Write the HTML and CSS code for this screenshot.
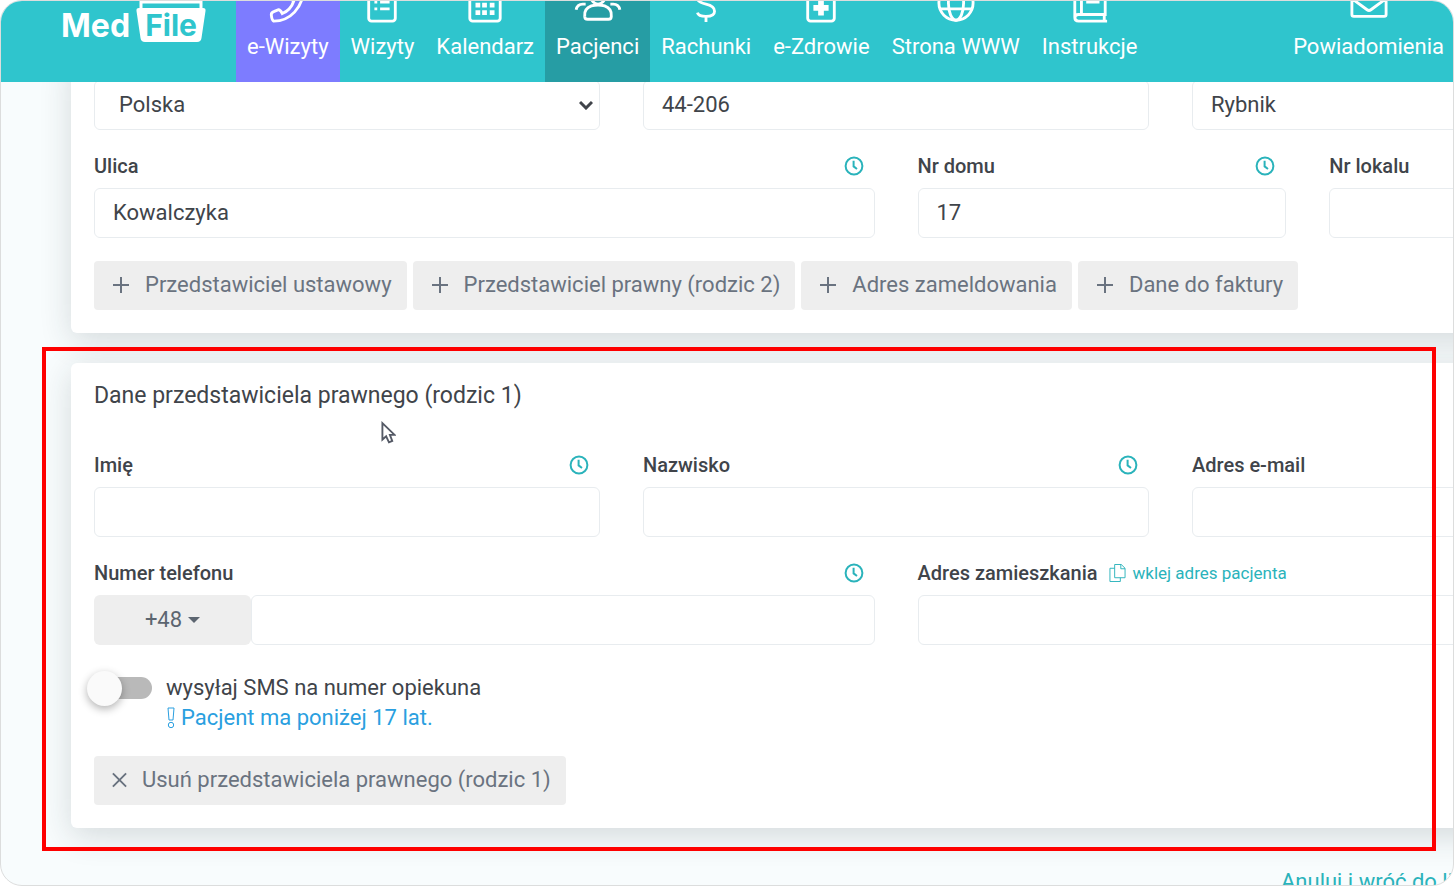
FILE: index.html
```html
<!DOCTYPE html>
<html lang="pl">
<head>
<meta charset="utf-8">
<title>MedFile - Pacjenci</title>
<link rel="stylesheet" href="styles.css">
</head>
<body>
<svg class="defs" aria-hidden="true">
  <symbol id="clock" viewBox="0 0 20 20"><circle cx="10" cy="10" r="8.4"/><path d="M9.6 4.8V10.4L13 13"/></symbol>
  <symbol id="plus" viewBox="0 0 18 18"><path d="M9 1V17M1 9H17"/></symbol>
</svg>
<div class="frame">
  <header class="topbar">
    <a class="logo" href="#" aria-label="MedFile">
      <span class="logo-med">Med</span>
      <span class="logo-box">
        <svg class="logo-folder" viewBox="0 0 70 42" aria-hidden="true"><path d="M5 0V8M65 0V8M5 1H65" fill="none" stroke="#fff" stroke-width="3"/><path d="M3 7H67Q70 7 69.500 10L65.500 37Q65 41 61 41H9Q5 41 4.500 37L.5 10Q0 7 3 7Z" fill="#fff" stroke="none"/></svg>
        <span class="logo-file">File</span>
      </span>
    </a>
    <nav class="nav">
      <a class="nav-item visits" href="#"><svg class="nav-icon" viewBox="0 0 40 40"><path d="M36 6C35 22 23 37 5 37Q3 36 2.500 31Q2 28 5 27L10 25Q12 25 14 29Q23 25 26 16L22 13V9L26 3L34 4Z"/></svg>e-Wizyty</a>
      <a class="nav-item" href="#"><svg class="nav-icon" viewBox="0 0 40 40"><rect x="6" y="4" width="28" height="33" rx="3"/><path d="M12 17H15M18 17H28M12 24H15M18 24H28"/></svg>Wizyty</a>
      <a class="nav-item" href="#"><svg class="nav-icon" viewBox="0 0 40 40"><rect x="4" y="4" width="32" height="33" rx="3"/><path d="M10 20H15M17 20H22M25 20H30M10 28H15M17 28H22M25 28H30" stroke-width="5"/></svg>Kalendarz</a>
      <a class="nav-item active" href="#"><svg class="nav-icon wide" viewBox="0 0 50 40"><circle cx="25" cy="12" r="7"/><path d="M11 32Q10 24 18 21Q25 19 32 21Q40 24 39 32Q39 35 36 35H14Q11 35 11 32M2 25Q3 19 9 19H12M48 25Q47 19 41 19H38"/></svg>Pacjenci</a>
      <a class="nav-item" href="#"><svg class="nav-icon" viewBox="0 0 40 40"><path d="M29 13Q28 8 20 8Q11 8 11 13Q11 17 20 19Q29 21 29 26.500Q29 32 20 32Q12 32 11 28M20 3V8M20 32V38"/></svg>Rachunki</a>
      <a class="nav-item" href="#"><svg class="nav-icon" viewBox="0 0 40 40"><rect x="6" y="4" width="28" height="33" rx="3"/><path d="M20 15V31M12 23H28" stroke-width="6"/></svg>e-Zdrowie</a>
      <a class="nav-item" href="#"><svg class="nav-icon" viewBox="0 0 40 40"><circle cx="20" cy="18" r="18"/><ellipse cx="20" cy="18" rx="8" ry="18"/><path d="M4 12H36M3 24H37"/></svg>Strona WWW</a>
      <a class="nav-item" href="#"><svg class="nav-icon" viewBox="0 0 40 40"><path d="M36 4H8Q4 4 4 8V33Q4 37 8 37H38M35 30V37M36 4V30H8Q4 30 4 34M11 4V30M16 17H30"/></svg>Instrukcje</a>
    </nav>
    <a class="nav-item notices" href="#"><svg class="nav-icon" viewBox="0 0 40 40"><path d="M2 5H38V30Q38 32 36 32H4Q2 32 2 30ZM3 14L18 25Q20 26.500 22 25L37 14"/></svg>Powiadomienia</a>
  </header>

  <main class="content">
    <section class="card address">
      <div class="grid">
        <div class="select span-4">
          <select class="control" aria-label="Kraj"><option>Polska</option></select>
          <svg class="chevron" viewBox="0 0 14 10" aria-hidden="true"><path d="M1 2L7 8L13 2"/></svg>
        </div>
        <input class="control span-4" aria-label="Kod pocztowy" value="44-206">
        <input class="control span-4" aria-label="Miasto" value="Rybnik">
        <div class="span-6">
          <div class="label-row"><label for="street">Ulica</label><button class="history" aria-label="Historia"><svg><use href="#clock"/></svg></button></div>
          <input class="control" id="street" value="Kowalczyka">
        </div>
        <div class="span-3">
          <div class="label-row"><label for="house">Nr domu</label><button class="history" aria-label="Historia"><svg><use href="#clock"/></svg></button></div>
          <input class="control" id="house" value="17">
        </div>
        <div class="span-3">
          <div class="label-row"><label for="flat">Nr lokalu</label></div>
          <input class="control" id="flat">
        </div>
      </div>
      <div class="buttons">
        <button class="btn"><svg><use href="#plus"/></svg>Przedstawiciel ustawowy</button>
        <button class="btn"><svg><use href="#plus"/></svg>Przedstawiciel prawny (rodzic 2)</button>
        <button class="btn"><svg><use href="#plus"/></svg>Adres zameldowania</button>
        <button class="btn"><svg><use href="#plus"/></svg>Dane do faktury</button>
      </div>
    </section>

    <section class="card guardian">
      <h2 class="title">Dane przedstawiciela prawnego (rodzic 1)</h2>
      <div class="grid">
        <div class="span-4">
          <div class="label-row"><label for="first">Imię</label><button class="history" aria-label="Historia"><svg><use href="#clock"/></svg></button></div>
          <input class="control" id="first">
        </div>
        <div class="span-4">
          <div class="label-row"><label for="last">Nazwisko</label><button class="history" aria-label="Historia"><svg><use href="#clock"/></svg></button></div>
          <input class="control" id="last">
        </div>
        <div class="span-4">
          <div class="label-row"><label for="mail">Adres e-mail</label></div>
          <input class="control" id="mail">
        </div>
        <div class="span-6">
          <div class="label-row"><label for="phone">Numer telefonu</label><button class="history" aria-label="Historia"><svg><use href="#clock"/></svg></button></div>
          <div class="phone"><button class="prefix">+48<span class="caret"></span></button><input class="control" id="phone"></div>
        </div>
        <div class="span-6">
          <div class="label-row"><label for="home">Adres zamieszkania</label><a class="paste" href="#"><svg viewBox="0 0 18 20"><path d="M6 1H13L17 5V15H6ZM12.500 1V5.500H17M6 5H1V19H12V15"/></svg>wklej adres pacjenta</a></div>
          <input class="control" id="home">
        </div>
      </div>
      <div class="sms">
        <input class="switch" type="checkbox" id="sms">
        <div>
          <label class="sms-label" for="sms">wysyłaj SMS na numer opiekuna</label>
          <p class="hint"><svg viewBox="0 0 10 22"><path d="M2 1H8L7 13H3Z"/><circle cx="5" cy="18" r="2.700"/></svg>Pacjent ma poniżej 17 lat.</p>
        </div>
      </div>
      <button class="btn remove"><svg viewBox="0 0 18 18"><path d="M2 2L16 16M16 2L2 16"/></svg>Usuń przedstawiciela prawnego (rodzic 1)</button>
    </section>
  </main>
  <footer class="footer"><a href="#">Anuluj i wróć do listy</a></footer>

  <div class="highlight"></div>
  <svg class="pointer" viewBox="0 0 16 24" aria-hidden="true"><path d="M1.500 1.500V19L5.500 15.500L8.500 22L12 20.500L9.500 14H14.500Z"/></svg>
</div>
</body>
</html>
```
FILE: styles.css
```css
* { box-sizing: border-box; }
body {
  margin: 0;
  background: #fff;
  color: #40444a;
  font: 22px/26px Roboto, sans-serif;
}
button, input, select { font: inherit; color: inherit; }
a { text-decoration: none; }
svg { fill: none; stroke: currentColor; }
.defs { display: none; }
.frame {
  position: relative;
  height: 100vh;
  overflow: hidden;
  border: 1px solid #dcdddd;
  border-radius: 22px;
  background: #f8fcfd;
}

/* top bar */
.topbar {
  position: relative;
  z-index: 1;
  display: flex;
  height: 81px;
  overflow: hidden;
  background: #2fc5cd;
  color: #fff;
}
.logo {
  display: flex;
  align-items: flex-start;
  gap: 6px;
  width: 235px;
  padding-left: 60px;
  color: #fff;
  font: 700 32px/36px Inter, sans-serif;
}
.logo-med { padding-top: 7px; }
.logo-box { position: relative; width: 70px; height: 42px; }
.logo-folder { display: block; width: 70px; height: 42px; }
.logo-file {
  position: absolute;
  inset: 6px 0 0;
  color: #2fc5cd;
  font-size: 30px;
  text-align: center;
}
.nav { display: flex; align-items: flex-end; }
.nav-item {
  display: flex;
  flex-direction: column;
  align-items: center;
  justify-content: flex-end;
  gap: 10px;
  height: 96px;
  padding: 0 11px 22px;
  color: #fff;
  white-space: nowrap;
}
.nav-icon { width: 38px; height: 38px; stroke-width: 3; flex: none; }
.nav-icon.wide { width: 48px; }
.visits { background: #7d7cff; }
.active { background: #269da4; }
.notices { align-self: flex-end; margin-left: auto; padding-right: 9px; }

/* cards */
.content { display: grid; gap: 30px; margin: -26px -268px 0 70px; }
.card {
  padding: 0 23px 23px;
  border-radius: 6px;
  background: #fff;
  box-shadow: 0 8px 32px rgba(30, 45, 50, .16);
}
.address { padding-top: 24px; }
.guardian { padding-top: 20px; }
.title { margin: 0 0 43px; font-size: 23px; font-weight: 400; }
.grid {
  display: grid;
  grid-template-columns: repeat(12, minmax(0, 1fr));
  gap: 23px 43px;
}
.span-3 { grid-column: span 3; }
.span-4 { grid-column: span 4; }
.span-6 { grid-column: span 6; }
.label-row {
  display: flex;
  align-items: center;
  height: 26px;
  margin-bottom: 9px;
  padding-right: 11px;
  font-size: 20px;
  font-weight: 500;
}
.history {
  display: flex;
  margin-left: auto;
  padding: 0;
  border: 0;
  background: none;
  color: #2ab3bb;
}
.history svg { width: 20px; height: 20px; stroke-width: 2; }
.control {
  display: block;
  width: 100%;
  height: 50px;
  padding: 0 18px 2px;
  border: 1px solid #e8ecef;
  border-radius: 6px;
  background-color: #fff;
}
.select { position: relative; }
.select .control { appearance: none; padding: 0 24px; }
.chevron {
  position: absolute;
  top: 20px;
  right: 7px;
  width: 14px;
  height: 10px;
  stroke-width: 3;
  pointer-events: none;
}
.buttons { display: flex; gap: 6px; margin-top: 23px; }
.btn {
  display: flex;
  align-items: center;
  gap: 15px;
  height: 49px;
  padding: 0 15px 2px 18px;
  border: 0;
  border-radius: 4px;
  background: #eee;
  color: #6a7380;
  white-space: nowrap;
}
.btn svg { width: 18px; height: 18px; stroke-width: 2; }
.phone { display: flex; }
.prefix {
  display: flex;
  flex: none;
  align-items: center;
  justify-content: center;
  gap: 6px;
  width: 157px;
  border: 0;
  border-radius: 6px;
  background: #eee;
  color: #5c6570;
}
.caret {
  border: 6px solid transparent;
  border-top-color: currentColor;
  border-bottom: 0;
}
.paste {
  display: flex;
  align-items: center;
  gap: 7px;
  margin-left: 11px;
  color: #2ab3bb;
  font-size: 17px;
  font-weight: 400;
}
.paste svg { width: 17px; height: 20px; stroke-width: 1; }

.sms { display: flex; gap: 14px; margin: 28px 0 23px; line-height: 30px; }
.switch {
  appearance: none;
  position: relative;
  width: 51px;
  height: 22px;
  margin: 4px 0 0 7px;
  border-radius: 11px;
  background: #b9b9b9;
}
.switch::before {
  content: "";
  position: absolute;
  top: -6px;
  left: -14px;
  width: 35px;
  height: 35px;
  border-radius: 50%;
  background: #fafafa;
  box-shadow: 0 3px 9px rgba(0, 0, 0, .3);
}
.hint { display: flex; align-items: center; gap: 5px; margin: 0; color: #2a9fe0; }
.hint svg { width: 10px; height: 22px; stroke-width: 1; }
.remove { gap: 14px; padding-left: 17px; }
.remove svg { width: 17px; }

.footer { display: flex; justify-content: flex-end; margin-top: 41px; }
.footer a { width: 172px; color: #2ab3bb; white-space: nowrap; }

/* overlays */
.highlight {
  position: absolute;
  inset: 346px 17px 34px 41px;
  z-index: 2;
  border: 4px solid #fe0000;
}
.pointer {
  position: absolute;
  top: 420px;
  left: 380px;
  z-index: 2;
  width: 15px;
  height: 24px;
  fill: #fff;
  stroke: #555a66;
  stroke-width: 2;
}
```
